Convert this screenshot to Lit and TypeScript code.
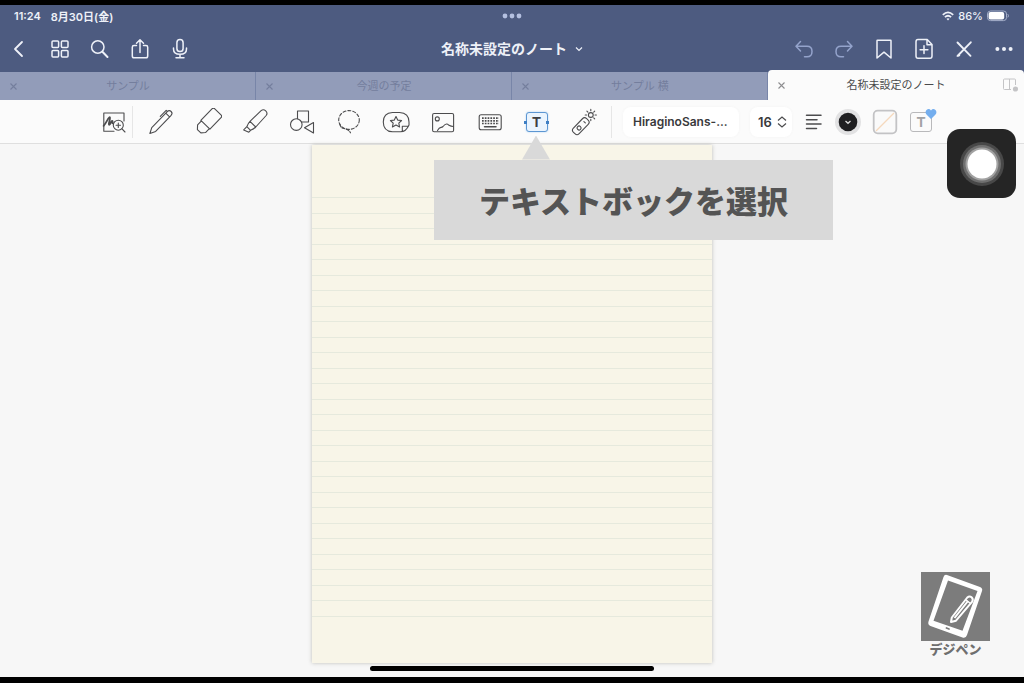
import { LitElement, html, css, svg, nothing } from "lit";
import type { SVGTemplateResult } from "lit";
import { customElement, property, state } from "lit/decorators.js";
import { classMap } from "lit/directives/class-map.js";

const shapes: Record<string, SVGTemplateResult> = {
  back: svg`<path d="M16 7 L9 14 L16 21" stroke-width="1.8"/>`,
  grid: svg`<rect x="6" y="6" width="6.6" height="6.6" rx="1"/><rect x="15.4" y="6" width="6.6" height="6.6" rx="1"/><rect x="6" y="15.4" width="6.6" height="6.6" rx="1"/><rect x="15.4" y="15.4" width="6.6" height="6.6" rx="1"/>`,
  search: svg`<circle cx="11.8" cy="12" r="6.2"/><path d="M16.4 16.8 L21.5 22" stroke-width="2"/>`,
  share: svg`<path d="M10.5 10.5 H8 Q6.3 10.5 6.3 12.2 V21 Q6.3 22.8 8 22.8 H20 Q21.7 22.8 21.7 21 V12.2 Q21.7 10.5 20 10.5 H17.5 M14 17.5 V5 M10.5 8.3 L14 4.8 L17.5 8.3"/>`,
  mic: svg`<rect x="10.9" y="4.6" width="6.2" height="12" rx="3.1"/><path d="M7.5 13 V14 Q7.5 19.3 14 19.3 Q20.5 19.3 20.5 14 V13 M14 19.3 V22.8 M10 22.8 H18"/>`,
  undo: svg`<path d="M10.5 6.5 L6 11.2 L10.5 16 M6.3 11.2 H17 Q22 11.2 22 16.4 Q22 21.8 17 21.8 H14.5"/>`,
  redo: svg`<path d="M17.5 6.5 L22 11.2 L17.5 16 M21.7 11.2 H11 Q6 11.2 6 16.4 Q6 21.8 11 21.8 H13.5"/>`,
  bookmark: svg`<path d="M7.5 5.2 H20.5 Q21 5.2 21 5.8 V23 L14 17.2 L7 23 V5.8 Q7 5.2 7.5 5.2 Z"/>`,
  addPage: svg`<path d="M8 4.6 H17.2 L22 9.5 V21 Q22 23.3 20 23.3 H8 Q6 23.3 6 21 V6.8 Q6 4.6 8 4.6 Z M17 5 V9.8 H22 M14 10.8 V18.6 M10.1 14.7 H17.9"/>`,
  penOff: svg`<path d="M7.5 7.5 L20.5 20.8 M8 20.5 L20.8 7.3" stroke-width="1.9"/><path d="M7.3 21 L9.5 20.5"/>`,
  more: svg`<g fill="currentColor" stroke="none"><circle cx="7.4" cy="14" r="2"/><circle cx="14" cy="14" r="2"/><circle cx="20.6" cy="14" r="2"/></g>`,
  zoomNote: svg`<path d="M24 13 V5 H3.8 V23.2 H14"/><path d="M3.6 17.8 C6.5 15 8.6 8.6 9.8 9.2 C11 10 7.8 16.6 9.2 16.8 C10.6 16.8 11.3 12.4 12.4 13 C13 13.5 12 15.4 13 15.3" stroke-width="1.8"/><circle cx="18.3" cy="17.2" r="5"/><path d="M22 20.8 L25 24 M18.3 15 V19.4 M16.1 17.2 H20.5"/>`,
  pen: svg`<g transform="translate(14 14) rotate(44)"><path d="M-2.7 -11.5 V10.5 L0 16 L2.7 10.5 V-11.5 Q2.7 -14.6 0 -14.6 Q-2.7 -14.6 -2.7 -11.5 Z M-2.7 -9.6 H2.7 M-2.7 -12 H-4.4 V-3.5"/></g>`,
  eraser: svg`<g transform="translate(14.5 13.5) rotate(44)"><path d="M-6.3 4.5 V-11.5 Q-6.3 -13.5 -4.3 -13.5 H4.3 Q6.3 -13.5 6.3 -11.5 V4.5 Z M-5.5 4.5 V10 L-2.4 13.5 H2.4 L5.5 10 V4.5"/></g>`,
  marker: svg`<g transform="translate(14.3 13.7) rotate(44)"><path d="M-4 3.5 L-3.5 -12 Q-3.2 -15 0 -15 Q3.2 -15 3.5 -12 L4 3.5 Z M-4 3.5 Q-4 6.5 -2.6 9.5 H2.6 Q4 6.5 4 3.5 M-2.6 9.5 V14 L2.6 12 V9.5"/></g>`,
  shapes: svg`<rect x="9.5" y="3" width="11" height="11"/><circle cx="8.3" cy="16.6" r="5.8" fill="#fbfbfb"/><path d="M25.5 14.5 V25 L16.5 19.7 Z" fill="#fbfbfb"/>`,
  lasso: svg`<ellipse cx="14" cy="12" rx="10.3" ry="9.4" stroke-dasharray="3 2"/><path d="M4.8 16 Q5.5 20 9 20.5 Q13.5 21.3 15.5 24.8" stroke-dasharray="3 1.4"/>`,
  sticker: svg`<path d="M10.5 4.5 H17.5 Q27 5 27 14 V17 Q24 23.8 18.5 23.8 H10.5 Q1.3 23.3 1.3 14 Q1.3 5 10.5 4.5 Z M20.3 23 V18.2 H26.4"/><path d="M14 8.5 L15.7 12.1 L19.6 12.5 L16.8 15.1 L17.6 19 L14 17.1 L10.4 19 L11.2 15.1 L8.4 12.5 L12.3 12.1 Z"/>`,
  photo: svg`<rect x="3.6" y="5.5" width="21" height="18.3" rx="1.5"/><circle cx="8.3" cy="10.9" r="2"/><path d="M8.5 22.5 C11 18 12 20.3 14 18.5 C17 14.9 18.5 15.8 20 17.3 Q22 18.5 24.4 18.5"/>`,
  keyboard: svg`<rect x="3.2" y="6.7" width="22" height="15" rx="2"/><path d="M6 10.1 H23 M6 12.8 H23 M6 15.5 H23" stroke-width="1.7" stroke-dasharray="1.7 1.1" stroke-linecap="butt"/><path d="M8.5 18.7 H20" stroke-width="1.5"/>`,
  laser: svg`<g transform="translate(10.8 18.2) rotate(44)"><rect x="-4" y="-9.5" width="8" height="19" rx="3"/><circle cx="0" cy="2.5" r="2"/><path d="M-1 -5.5 H1"/></g><circle cx="20.8" cy="7" r="2.4"/><path d="M20.8 1.4 V2.8 M20.8 11.2 V12.6 M15.2 7 H16.6 M25 7 H26.4 M16.9 3.1 L17.9 4.1 M23.7 9.9 L24.7 10.9 M24.7 3.1 L23.7 4.1"/>`,
  align: svg`<path d="M6.5 7.3 H21 M6.5 11.7 H17 M6.5 16.1 H21 M6.5 20.4 H16.5" stroke-width="1.5"/>`,
};

const icon = (name: string) =>
  html`<svg class="icon" viewBox="0 0 28 28" aria-hidden="true">${shapes[name]}</svg>`;

@customElement("note-header")
class NoteHeader extends LitElement {
  static styles = css`
    :host { display: block; background: #4d5b80; color: #eef1f8; }
    .status { display: flex; align-items: center; justify-content: space-between; height: 22px; padding: 0 15px 0 14px; font-size: 11px; font-weight: 600; }
    .side { display: flex; flex: 1; align-items: center; gap: 10px; }
    .end { justify-content: flex-end; gap: 4px; font-weight: 500; }
    .dots { width: 20px; height: 6px; fill: #b4c0e0; }
    .wifi { width: 12px; height: 10px; }
    .battery { width: 22px; height: 12px; }
    .bar { display: flex; align-items: center; height: 43px; }
    .group { display: flex; flex: 1; }
    .right { justify-content: flex-end; }
    button { display: flex; align-items: center; justify-content: center; width: 40px; height: 40px; padding: 0; border: 0; background: none; color: inherit; font: inherit; }
    .faded { color: #94a3cb; }
    .icon { width: 28px; height: 28px; fill: none; stroke: currentColor; stroke-width: 1.5; stroke-linecap: round; stroke-linejoin: round; }
    .title { width: auto; gap: 8px; font-size: 14px; font-weight: 700; line-height: 20px; white-space: nowrap; }
    .chevron { width: 8px; height: 8px; fill: none; stroke: currentColor; stroke-width: 1.2; }
  `;
  private tool(name: string, label: string, faded = false) {
    return html`<button class=${classMap({ faded })} aria-label=${label}>${icon(name)}</button>`;
  }
  render() {
    return html`
      <div class="status">
        <div class="side"><span>11:24</span><span>8月30日(金)</span></div>
        <svg class="dots" viewBox="0 0 20 6"><circle cx="3" cy="3" r="2.4"/><circle cx="10" cy="3" r="2.4"/><circle cx="17" cy="3" r="2.4"/></svg>
        <div class="side end">
          <svg class="wifi" viewBox="0 0 12 10" fill="none" stroke="currentColor" stroke-width="1.8"><path d="M.8 3.8 Q6 -1 11.2 3.8 M2.9 6.2 Q6 3.4 9.1 6.2"/><path d="M4.5 7.8 Q6 6.5 7.5 7.8 L6 9.4 Z" fill="currentColor" stroke="none"/></svg>
          <span>86%</span>
          <svg class="battery" viewBox="0 0 22 12"><rect x=".5" y="1" width="19" height="9.6" rx="3" fill="none" stroke="#a6b0ca"/><rect x="1.6" y="2.1" width="15.6" height="7.4" rx="1.9" fill="#fff"/><path d="M20.8 4.2 Q22.2 5.8 20.8 7.4" stroke="#a6b0ca" fill="none"/></svg>
        </div>
      </div>
      <div class="bar">
        <div class="group">
          ${this.tool("back", "戻る")}${this.tool("grid", "一覧")}${this.tool("search", "検索")}${this.tool("share", "共有")}${this.tool("mic", "録音")}
        </div>
        <button class="title">名称未設定のノート<svg class="chevron" viewBox="0 0 8 8"><path d="M1 2.5 L4 5.5 L7 2.5"/></svg></button>
        <div class="group right">
          ${this.tool("undo", "取り消す", true)}${this.tool("redo", "やり直す", true)}${this.tool("bookmark", "ブックマーク")}${this.tool("addPage", "ページを追加")}${this.tool("penOff", "閲覧モード")}${this.tool("more", "その他")}
        </div>
      </div>
    `;
  }
}

@customElement("note-tabs")
class NoteTabs extends LitElement {
  @property({ type: Array }) tabs: string[] = [];
  @state() private current = 3;
  static styles = css`
    :host { display: flex; align-items: flex-end; height: 30px; background: #4d5b80; }
    .tab { display: grid; grid-template-columns: 26px 1fr 26px; flex: 1 1 0; height: 28px; background: #929cb9; box-shadow: inset -1px 0 #7885a8; color: #747e9d; }
    .tab.current { height: 30px; background: #fbfbfb; color: #4a4a4c; box-shadow: none; border-radius: 4px 4px 0 0; }
    button { display: flex; align-items: center; justify-content: center; padding: 0; border: 0; background: none; color: inherit; font: inherit; font-size: 11px; line-height: 16px; }
    .x { width: 7px; height: 7px; fill: none; stroke: currentColor; stroke-width: 1.1; }
    .current .close { color: #8d8d8f; }
    .split { width: 16px; height: 16px; fill: none; stroke: #c4c4c6; }
  `;
  render() {
    return this.tabs.map((name, i) => html`
      <div class=${classMap({ tab: true, current: i === this.current })}>
        <button class="close" aria-label="閉じる"><svg class="x" viewBox="0 0 7 7"><path d="M.5 .5 L6.5 6.5 M6.5 .5 L.5 6.5"/></svg></button>
        <button class="name" @click=${() => (this.current = i)}>${name}</button>
        ${i === this.current
          ? html`<button aria-label="分割表示"><svg class="split" viewBox="0 0 16 16"><path d="M8 12.5 H1.5 Q.5 12.5 .5 11.5 V3 Q.5 2 1.5 2 H11.5 Q12.5 2 12.5 3 V8 M6.5 2 V12.5"/><circle cx="12.5" cy="12" r="2.6" fill="#c4c4c6" stroke="none"/></svg></button>`
          : nothing}
      </div>`);
  }
}

@customElement("note-toolbar")
class NoteToolbar extends LitElement {
  static styles = css`
    :host { display: flex; align-items: center; height: 43px; padding-left: 96px; background: #fbfbfb; border-bottom: 1px solid #dfdfdf; color: #4c4c4e; }
    button { display: flex; flex: none; align-items: center; justify-content: center; width: 47px; height: 40px; padding: 0; border: 0; background: none; color: inherit; }
    .first { width: 36px; }
    .tools { display: flex; margin: 0 4px; }
    .holder { position: relative; }
    .line { width: 1px; height: 32px; background: #e6e6e6; }
    .icon { width: 28px; height: 28px; fill: none; stroke: currentColor; stroke-width: 1.1; stroke-linecap: round; stroke-linejoin: round; }
    .glyph { display: flex; align-items: center; justify-content: center; box-sizing: border-box; width: 22px; height: 20px; border: 1px solid #5c96d2; border-radius: 3px; background: #eaf4fe; color: #3f3f42; font-size: 14px; font-weight: 800; box-shadow: 0 0 2px #a9cdf2; }
    .glyph.plain { border-color: #b9b9bb; background: none; color: #a2a2a4; font-weight: 600; box-shadow: none; }
    .knob { position: absolute; top: 19px; width: 3px; height: 3px; background: #3e7fc4; }
    .knob.l { left: 11px; }
    .knob.r { right: 11px; }
    .field { position: relative; display: flex; align-items: center; height: 30px; background: #fff; border-radius: 8px; box-shadow: 0 0 3px #f4f4f4; }
    .font { width: 116px; margin-left: 11px; }
    .size { width: 42px; margin: 0 8px 0 11px; }
    select { width: 100%; height: 100%; padding: 0 0 0 10px; border: 0; background: none; appearance: none; color: #3a3a3c; font: inherit; font-size: 12px; font-weight: 600; }
    .size select { padding-left: 8px; font-size: 13px; }
    .steps { position: absolute; right: 5px; width: 10px; height: 12px; fill: none; stroke: #4c4c4e; stroke-width: 1.2; pointer-events: none; }
    .narrow { width: 28px; }
    .color { width: 40px; }
    .swatch { display: block; width: 26px; height: 26px; }
    .fill { width: 34px; }
    .style { position: relative; width: 38px; }
    .heart { position: absolute; top: 6px; right: 3px; width: 12px; height: 12px; fill: #74aeee; }
    .callout { position: absolute; z-index: 2; top: 58px; left: -79px; display: flex; align-items: center; justify-content: center; width: 399px; height: 80px; background: #d9d9d9; color: #545454; font-size: 31px; font-weight: 900; white-space: nowrap; }
    .callout::before { content: ""; position: absolute; left: 88px; bottom: 100%; width: 28px; height: 24px; background: inherit; clip-path: polygon(50% 0, 100% 100%, 0 100%); }
  `;
  private tool(name: string, label: string, extra = "") {
    return html`<button class=${extra} aria-label=${label}>${icon(name)}</button>`;
  }
  render() {
    return html`
      ${this.tool("zoomNote", "拡大", "first")}
      <span class="line"></span>
      <div class="tools">
        ${this.tool("pen", "ペン")}${this.tool("eraser", "消しゴム")}${this.tool("marker", "蛍光ペン")}${this.tool("shapes", "図形")}${this.tool("lasso", "なげなわ")}${this.tool("sticker", "ステッカー")}${this.tool("photo", "写真")}${this.tool("keyboard", "キーボード")}
        <div class="holder">
          <button aria-label="テキスト"><span class="glyph">T</span><i class="knob l"></i><i class="knob r"></i></button>
          <div class="callout" role="tooltip">テキストボックを選択</div>
        </div>
        ${this.tool("laser", "レーザー")}
      </div>
      <span class="line"></span>
      <label class="field font"><select aria-label="フォント"><option>HiraginoSans-...</option></select></label>
      <label class="field size"><select aria-label="サイズ"><option>16</option></select>
        <svg class="steps" viewBox="0 0 10 12"><path d="M1 4.5 L5 1 L9 4.5 M1 7.5 L5 11 L9 7.5"/></svg></label>
      ${this.tool("align", "行揃え", "narrow")}
      <button class="color" aria-label="文字色"><svg class="swatch" viewBox="0 0 26 26"><circle cx="13" cy="13" r="13" fill="#e2e2e3"/><circle cx="13" cy="13" r="9.3" fill="#1f1f21"/><path d="M10.5 12 L13 14.3 L15.5 12" fill="none" stroke="#ddd" stroke-width="1.3"/></svg></button>
      <button class="fill" aria-label="背景色"><svg class="swatch" viewBox="0 0 26 26"><rect x="1.7" y="1.7" width="22.6" height="22.6" rx="4" fill="#fafafa" stroke="#c3c3c5" stroke-width="1.8"/><path d="M4 22 L22 4" stroke="#f5d9bd" stroke-width="1.3"/></svg></button>
      <button class="style" aria-label="スタイル"><span class="glyph plain">T</span><svg class="heart" viewBox="0 0 12 12"><path d="M6 11 L1.5 6.5 Q-.3 4 1.5 2 Q4 0 6 2.5 Q8 0 10.5 2 Q12.3 4 10.5 6.5 Z"/></svg></button>
    `;
  }
}

@customElement("note-page")
class NotePage extends LitElement {
  static styles = css`
    :host { position: relative; display: flex; justify-content: center; min-height: 0; padding: 1px 0 14px; background: #f7f7f7; }
    .paper { display: grid; grid-template-rows: 52fr 420fr 46fr; aspect-ratio: 400 / 518; background: #f8f5e8; box-shadow: 0 0 4px #bdbdb8; }
    .rules { display: flex; flex-direction: column; grid-row: 2; border-bottom: 1px solid #e6e9dd; }
    .rule { flex: 1; border-top: 1px solid #e6e9dd; }
    .home { position: absolute; left: 50%; bottom: 6px; width: 284px; height: 5px; margin-left: -142px; border-radius: 3px; background: #000; }
    .brand { position: absolute; right: 34px; bottom: 19px; display: flex; flex-direction: column; align-items: center; color: #6f6f6f; font-size: 13px; font-weight: 900; line-height: 17px; }
    .logo { display: block; width: 69px; height: 69px; }
  `;
  render() {
    return html`
      <div class="paper"><div class="rules">${Array.from({ length: 27 }, () => html`<div class="rule"></div>`)}</div></div>
      <div class="home"></div>
      <div class="brand">
        <svg class="logo" viewBox="0 0 69 69">
          <rect width="69" height="69" fill="#7c7c7c"/>
          <path fill="#fff" fill-rule="evenodd" d="M26 3 L59 15 Q62 16.3 61 19 L46 63 Q45 66.5 41.5 65.5 L9.5 54 Q6.5 52.6 7.5 49.5 L22.5 5 Q23.5 2.2 26 3 Z M27 8.5 L12.5 48.7 L41.5 58.7 L56.5 19 Z"/>
          <path d="M25.5 56 L28 57" stroke="#7c7c7c" stroke-width="1.8" stroke-linecap="round"/>
          <path d="M30 50 L30.8 45.5 L46.3 25.5 Q48.5 23.5 50.6 25.2 Q52.6 27 51.2 29.6 L35 48.7 Z M33.5 46 L47 29" fill="none" stroke="#fff" stroke-width="2" stroke-linejoin="round"/>
          <path d="M45 28 L49.5 31.5" stroke="#fff" stroke-width="1.5"/>
        </svg>
        <span>デジペン</span>
      </div>
    `;
  }
}

@customElement("app-root")
class AppRoot extends LitElement {
  static styles = css`
    :host { position: relative; display: flex; flex-direction: column; box-sizing: border-box; height: 100vh; padding: 5px 0 6px; overflow: hidden; background: #000; font-family: Inter, "Noto Sans CJK JP", sans-serif; }
    note-page { flex: 1; }
    .touch { position: absolute; z-index: 3; top: 129px; right: 8px; display: flex; align-items: center; justify-content: center; width: 69px; height: 69px; padding: 0; border: 0; border-radius: 13px; background: #252525; }
    .ring { width: 46px; height: 46px; }
  `;
  render() {
    return html`
      <note-header></note-header>
      <note-tabs .tabs=${["サンプル", "今週の予定", "サンプル 横", "名称未設定のノート"]}></note-tabs>
      <note-toolbar></note-toolbar>
      <note-page></note-page>
      <button class="touch" aria-label="AssistiveTouch"><svg class="ring" viewBox="0 0 46 46"><circle cx="23" cy="23" r="22" fill="#484848"/><circle cx="23" cy="23" r="19" fill="#707070"/><circle cx="23" cy="23" r="16.5" fill="#a2a2a2"/><circle cx="23" cy="23" r="14.5" fill="#fff"/></svg></button>
    `;
  }
}
